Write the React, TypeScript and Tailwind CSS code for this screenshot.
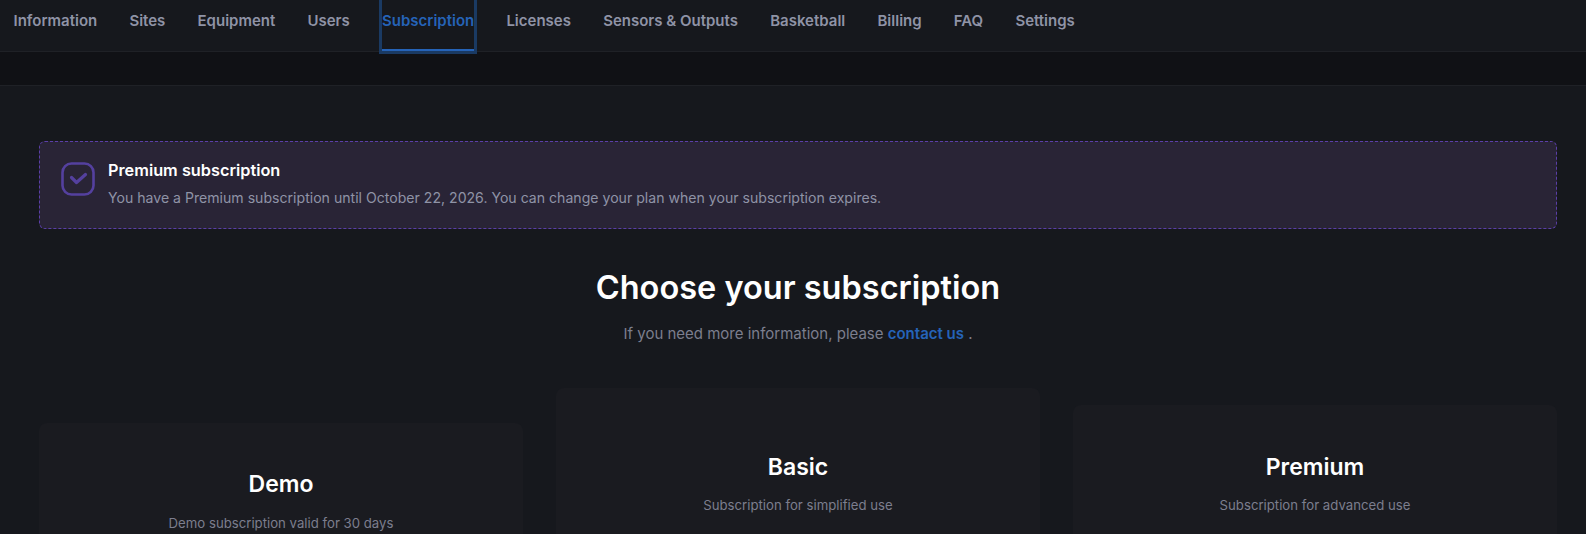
const tabs = ['Information', 'Sites', 'Equipment', 'Users', 'Subscription', 'Licenses', 'Sensors & Outputs', 'Basketball', 'Billing', 'FAQ', 'Settings'];

const plans = [
  { name: 'Demo', text: 'Demo subscription valid for 30 days', box: 'mt-[35px] pt-[43px]', gap: 'mt-[11px]' },
  { name: 'Basic', text: 'Subscription for simplified use', box: 'mt-0 pt-[61px]', gap: 'mt-[10px]' },
  { name: 'Premium', text: 'Subscription for advanced use', box: 'mt-[17px] pt-[44px]', gap: 'mt-[10px]' },
];

export default function App() {
  return (
    <div className="h-[534px] overflow-hidden bg-[#16181d] font-['Inter',sans-serif]">
      {/* Tabs */}
      <nav className="flex h-[52px] gap-[32.2px] border-b border-[#1f2126] pl-[13.5px]">
        {tabs.map((tab) =>
          tab === 'Subscription' ? (
            <div
              key={tab}
              className="relative z-10 h-[51px] border-b-2 border-[#2563b8] pt-[8px] text-[15px] leading-[26px] font-semibold text-[#2563b8] outline-[3px] outline-[#1a3a63]"
            >
              {tab}
            </div>
          ) : (
            <div key={tab} className="pt-[8px] text-[15px] leading-[26px] font-semibold text-[#8f93a6]">
              {tab}
            </div>
          ),
        )}
      </nav>
      <div className="h-[34px] border-b border-[#1f2126] bg-[#101115]" />

      <main className="pt-[55px] pr-[29px] pl-[39px]">
        {/* Alert */}
        <div className="flex h-[88px] items-center gap-[13px] rounded-md border border-dashed border-[#5b3fa8] bg-[#292436] pr-[22px] pl-[21px]">
          <svg className="-mt-[13px]" width="34" height="34" viewBox="0 0 34 34" fill="none" stroke="#54409f" strokeWidth="2.6" strokeLinecap="round" strokeLinejoin="round">
            <rect x="1.5" y="1.5" width="31" height="31" rx="9" />
            <polyline points="10.5,15.5 15.5,20.5 24.5,12.5" strokeWidth="3.2" />
          </svg>
          <div className="-mt-[4px]">
            <div className="text-[16.3px] leading-[24px] font-semibold text-white">Premium subscription</div>
            <div className="mt-[5px] text-[14.1px] leading-[22px] text-[#8f93a6]">
              You have a Premium subscription until October 22, 2026. You can change your plan when your subscription expires.
            </div>
          </div>
        </div>

        {/* Heading */}
        <h1 className="mt-[37px] text-center text-[32.5px] leading-[44px] font-semibold text-white">Choose your subscription</h1>
        <p className="mt-[12px] text-center text-[15px] leading-[24px] text-[#7c7e8e]">
          If you need more information, please <span className="font-semibold text-[#2563b8]">contact us</span> .
        </p>

        {/* Plans */}
        <div className="mt-[42px] grid grid-cols-3 items-start gap-[33px]">
          {plans.map((plan) => (
            <div key={plan.name} className={`${plan.box} h-[300px] rounded-lg bg-[#1a1b20] text-center`}>
              <div className="text-[23px] leading-[36px] font-semibold text-white">{plan.name}</div>
              <div className={`${plan.gap} text-[13.2px] leading-[20px] text-[#7c7e8e]`}>{plan.text}</div>
            </div>
          ))}
        </div>
      </main>
    </div>
  );
}
